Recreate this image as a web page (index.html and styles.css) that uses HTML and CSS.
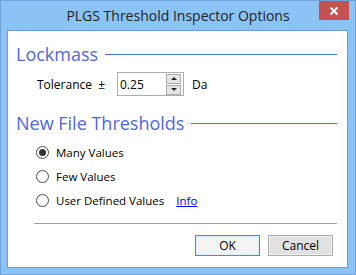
FILE: index.html
```html
<!DOCTYPE html>
<html lang="en">
<head>
  <meta charset="UTF-8">
  <title>PLGS Threshold Inspector Options</title>
  <link rel="stylesheet" href="styles.css">
</head>
<body>
  <div class="window">
    <div class="titlebar">
      <div class="title">PLGS Threshold Inspector Options</div>
      <div class="close">
        <svg width="10" height="10" viewBox="0 0 10 10">
          <path d="M1.5 1.5 L8.5 8.5 M8.5 1.5 L1.5 8.5" stroke="#fff" stroke-width="2"/>
        </svg>
      </div>
    </div>
    <div class="client">
      <div class="group-head">
        <span>Lockmass</span>
        <div class="rule"></div>
      </div>
      <div class="tol-row">
        <span class="tol-label">Tolerance &nbsp;±</span>
        <div class="spin">
          <span class="spin-value">0.25</span>
          <div class="spin-btns">
            <div class="spin-btn"><div class="tri-up"></div></div>
            <div class="spin-btn"><div class="tri-down"></div></div>
          </div>
        </div>
        <span class="unit">Da</span>
      </div>

      <div class="group-head second">
        <span>New File Thresholds</span>
        <div class="rule"></div>
      </div>
      <div class="radios">
        <div class="radio-row"><span class="radio checked"></span>Many Values</div>
        <div class="radio-row"><span class="radio"></span>Few Values</div>
        <div class="radio-row"><span class="radio"></span>User Defined Values<a class="info" href="#">Info</a></div>
      </div>

      <div class="separator"></div>
      <div class="buttons">
        <div class="btn default">OK</div>
        <div class="btn">Cancel</div>
      </div>
    </div>
  </div>
</body>
</html>
```

FILE: styles.css
```css
body {
  margin: 0;
  font-family: "Open Sans", "Noto Sans", sans-serif;
}

.window {
  width: 356px;
  height: 275px;
  box-sizing: border-box;
  border: 1px solid #6fa3d8;
  background: #8bc3f4;
  display: flex;
  flex-direction: column;
}

.titlebar {
  height: 29px;
  display: grid;
  grid-template-columns: 1fr auto 1fr;
  align-items: start;
}

.title {
  grid-column: 2;
  font-size: 14px;
  color: #222;
  line-height: 20px;
  padding-top: 5px;
}

.close {
  grid-column: 3;
  justify-self: end;
  width: 30px;
  height: 19px;
  margin-right: 6px;
  background: #c75050;
  display: flex;
  align-items: center;
  justify-content: center;
}

.client {
  flex: 1;
  margin: 0 7px 6px 6px;
  border: 1px solid #6b9cd2;
  background: #fff;
  padding: 0 10px 0 8px;
  display: flex;
  flex-direction: column;
}

.group-head {
  display: flex;
  align-items: center;
  color: #4f68df;
  font-size: 18px;
  line-height: 24px;
  margin-top: 11px;
}

.group-head.second {
  margin-top: 15px;
}

.rule {
  flex: 1;
  height: 1px;
  background: #4a6ee0;
  margin-left: 7px;
  margin-top: 1px;
}

.tol-row {
  display: flex;
  align-items: center;
  margin-top: 6px;
  font-size: 12px;
  color: #000;
}

.tol-label {
  margin-left: 21px;
  width: 80px;
}

.spin {
  width: 63px;
  height: 22px;
  border: 1px solid #abadb3;
  display: flex;
  align-items: center;
  justify-content: space-between;
  padding-left: 2px;
}

.spin-btns {
  display: flex;
  flex-direction: column;
  gap: 1px;
  margin-right: 2px;
}

.spin-btn {
  width: 13px;
  height: 8px;
  border: 1px solid #acacac;
  background: #e5e5e5;
  display: flex;
  align-items: center;
  justify-content: center;
}

.tri-up {
  border-left: 3px solid transparent;
  border-right: 3px solid transparent;
  border-bottom: 3px solid #222;
}

.tri-down {
  border-left: 3px solid transparent;
  border-right: 3px solid transparent;
  border-top: 3px solid #222;
}

.unit {
  margin-left: 8px;
}

.radios {
  display: flex;
  flex-direction: column;
  gap: 6px;
  margin-top: 8px;
  padding-left: 20px;
  font-size: 11.5px;
  color: #000;
}

.radio-row {
  display: flex;
  align-items: center;
  height: 18px;
}

.radio {
  width: 11px;
  height: 11px;
  border: 1px solid #4d4d4d;
  border-radius: 50%;
  margin-right: 7px;
  display: flex;
  align-items: center;
  justify-content: center;
}

.radio.checked::after {
  content: "";
  width: 7px;
  height: 7px;
  border-radius: 50%;
  background: #333;
}

.info {
  color: #0000ee;
  margin-left: 12px;
}

.separator {
  height: 1px;
  background: #a0a0a0;
  margin: 14px 0 0 18px;
}

.buttons {
  display: flex;
  justify-content: flex-end;
  gap: 8px;
  margin-top: 11px;
  padding-right: 4px;
}

.btn {
  width: 63px;
  height: 19px;
  border: 1px solid #adadad;
  background: #e1e1e1;
  font-size: 12px;
  line-height: 19px;
  text-align: center;
  color: #000;
  box-shadow: inset 0 0 0 1px #f0f0f0;
}

.btn.default {
  border-color: #3c8ee8;
  background: #f4f4f4;
  box-shadow: inset 0 0 0 1px #e0ecf8;
}
```
